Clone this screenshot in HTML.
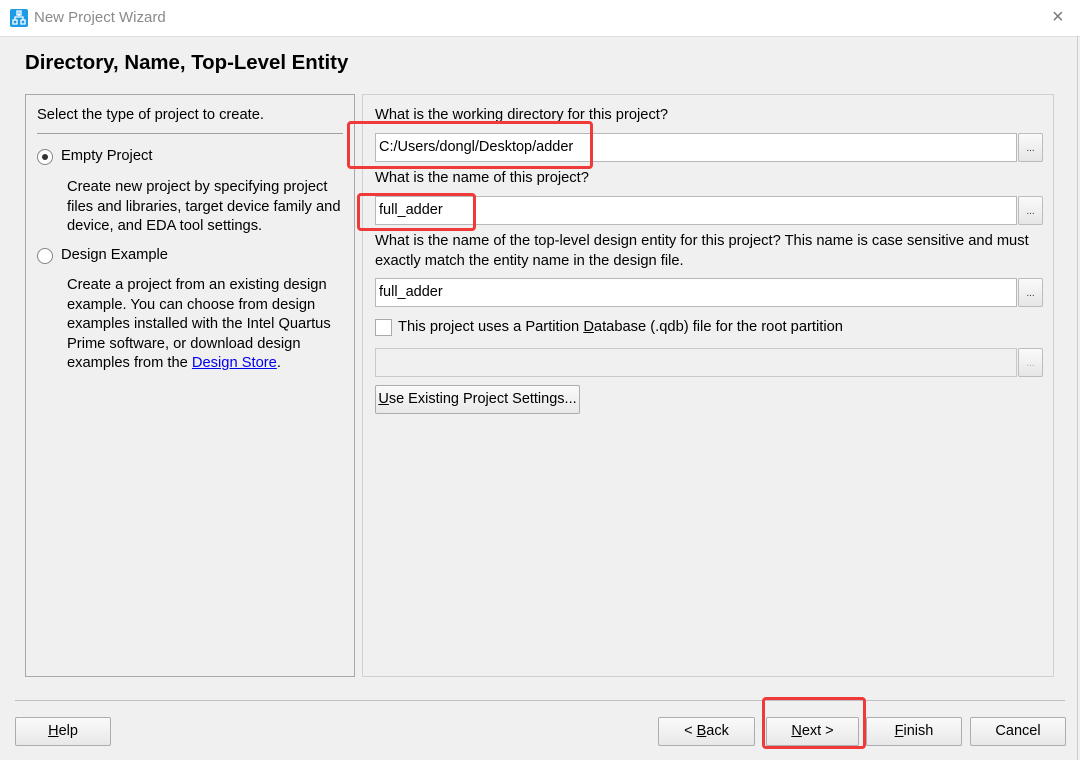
<!DOCTYPE html>
<html><head><style>
body{margin:0;width:1080px;height:760px;background:#f0f0f0;font-family:"Liberation Sans",sans-serif;font-size:14px;color:#000;position:relative;overflow:hidden}
.a{position:absolute;white-space:nowrap}
.inp{position:absolute;background:#fff;border:1px solid #b8b8b8;box-sizing:border-box;height:29px;padding:0 0 0 3px;line-height:27px;font-size:14.5px}
.dots{position:absolute;width:25px;height:29px;box-sizing:border-box;border:1px solid #bcbcbc;border-radius:2px;background:linear-gradient(#fafafa,#e6e6e6);font-size:10px;text-align:center;line-height:30px;color:#333}
.btn{position:absolute;height:29px;box-sizing:border-box;border:1px solid #adadad;border-radius:2px;background:linear-gradient(#fafafa,#e8e8e8);text-align:center;line-height:27px;font-size:14.5px}
.red{position:absolute;border:3px solid #f03a3a;border-radius:4px;box-sizing:border-box}
.t{font-size:14.7px;line-height:19.5px}
</style></head><body>
<div class="a" style="left:0;top:0;width:1080px;height:36px;background:#fff;border-bottom:1px solid #e0e0e0"></div>
<svg class="a" style="left:10px;top:9px" width="18" height="18" viewBox="0 0 18 18"><rect width="18" height="18" rx="2" fill="#1e9be6"/><path d="M9 3v4M5 11V8h8v3M3 11h4v4H3zM11 11h4v4h-4zM7 2h4v4H7z" stroke="#fff" stroke-width="1.3" fill="none"/></svg>
<div class="a" style="left:34px;top:9px;font-size:15px;color:#8a8a8a">New Project Wizard</div>
<div class="a" style="left:1052px;top:6px;font-size:20px;color:#777">×</div>
<div class="a" style="left:1077px;top:36px;width:1px;height:724px;background:#ccc"></div>
<div class="a" style="left:25px;top:52px;font-size:20.4px;font-weight:bold">Directory, Name, Top-Level Entity</div>

<div class="a" style="left:25px;top:94px;width:330px;height:583px;border:1px solid #a8a8a8;box-sizing:border-box"></div>
<div class="a t" style="left:37px;top:106px">Select the type of project to create.</div>
<div class="a" style="left:37px;top:133px;width:306px;height:1px;background:#a0a0a0"></div>
<div class="a" style="left:37px;top:149px;width:16px;height:16px;border:1px solid #888;border-radius:50%;box-sizing:border-box;background:#fff"></div>
<div class="a" style="left:42px;top:154px;width:6px;height:6px;border-radius:50%;background:#333"></div>
<div class="a t" style="left:61px;top:147px">Empty Project</div>
<div class="a t" style="left:67px;top:178px">Create new project by specifying project<br>files and libraries, target device family and<br>device, and EDA tool settings.</div>
<div class="a" style="left:37px;top:248px;width:16px;height:16px;border:1px solid #888;border-radius:50%;box-sizing:border-box;background:#fff"></div>
<div class="a t" style="left:61px;top:246px">Design Example</div>
<div class="a t" style="left:67px;top:276px">Create a project from an existing design<br>example. You can choose from design<br>examples installed with the Intel Quartus<br>Prime software, or download design<br>examples from the <span style="color:#0000ee;text-decoration:underline">Design Store</span>.</div>

<div class="a" style="left:362px;top:94px;width:692px;height:583px;border:1px solid #d0d0d0;box-sizing:border-box"></div>
<div class="a t" style="left:375px;top:106px">What is the working directory for this project?</div>
<div class="inp" style="left:375px;top:133px;width:642px">C:/Users/dongl/Desktop/adder</div>
<div class="dots" style="left:1018px;top:133px">...</div>
<div class="a t" style="left:375px;top:169px">What is the name of this project?</div>
<div class="inp" style="left:375px;top:196px;width:642px">full_adder</div>
<div class="dots" style="left:1018px;top:196px">...</div>
<div class="a t" style="left:375px;top:232px">What is the name of the top-level design entity for this project? This name is case sensitive and must<br>exactly match the entity name in the design file.</div>
<div class="inp" style="left:375px;top:278px;width:642px">full_adder</div>
<div class="dots" style="left:1018px;top:278px">...</div>
<div class="a" style="left:375px;top:319px;width:17px;height:17px;border:1px solid #aaa;background:#fff;box-sizing:border-box"></div>
<div class="a t" style="left:398px;top:318px">This project uses a Partition <u>D</u>atabase (.qdb) file for the root partition</div>
<div class="inp" style="left:375px;top:348px;width:642px;background:#f0f0f0;border-color:#c8c8c8"></div>
<div class="dots" style="left:1018px;top:348px;color:#aaa">...</div>
<div class="btn" style="left:375px;top:385px;width:205px"><u>U</u>se Existing Project Settings...</div>

<div class="a" style="left:15px;top:700px;width:1050px;height:1px;background:#c0c0c0"></div>
<div class="btn" style="left:15px;top:717px;width:96px"><u>H</u>elp</div>
<div class="btn" style="left:658px;top:717px;width:97px">&lt; <u>B</u>ack</div>
<div class="btn" style="left:766px;top:717px;width:93px"><u>N</u>ext &gt;</div>
<div class="btn" style="left:866px;top:717px;width:96px"><u>F</u>inish</div>
<div class="btn" style="left:970px;top:717px;width:96px">Cancel</div>

<div class="red" style="left:347px;top:121px;width:246px;height:48px"></div>
<div class="red" style="left:357px;top:193px;width:119px;height:38px"></div>
<div class="red" style="left:762px;top:697px;width:104px;height:52px"></div>
</body></html>
